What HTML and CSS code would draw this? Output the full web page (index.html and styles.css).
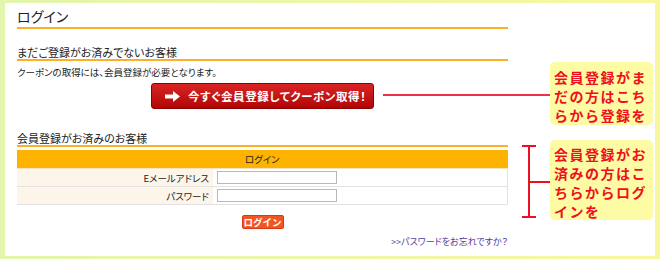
FILE: index.html
```html
<!DOCTYPE html>
<html lang="ja">
<head>
  <meta charset="UTF-8" />
  <title>ログイン</title>
  <link rel="stylesheet" href="styles.css">
</head>
<body>
  <div class="panel">
    <div class="content">
      <h1 class="title">ログイン</h1>

      <!-- 未登録 -->
      <h2 class="section">まだご登録がお済みでないお客様</h2>
      <p class="notice">クーポンの取得には、会員登録が必要となります。</p>
      <a class="btn-register" href="#">
        <svg width="15" height="11" viewBox="0 0 15 11"><path d="M0 3.5h8V0l7 5.5-7 5.5V7.5H0z" fill="#fff"/></svg>
        <span>今すぐ会員登録してクーポン取得！</span>
      </a>

      <!-- 登録済み -->
      <h2 class="section section-2">会員登録がお済みのお客様</h2>
      <table class="login-table">
        <tr><th colspan="2">ログイン</th></tr>
        <tr>
          <td class="label">Eメールアドレス</td>
          <td class="field"><input type="text" /></td>
        </tr>
        <tr>
          <td class="label">パスワード</td>
          <td class="field"><input type="password" /></td>
        </tr>
      </table>
      <div class="login-row"><button class="btn-login">ログイン</button></div>
      <div class="forgot"><a href="#">&gt;&gt;パスワードをお忘れですか？</a></div>
    </div>

    <!-- 注釈 -->
    <div class="note-line"></div>
    <div class="callout callout-1">会員登録がま<br>だの方はこち<br>らから登録を</div>

    <div class="bracket">
      <div class="bracket-cap top"></div>
      <div class="bracket-cap bottom"></div>
      <div class="bracket-arm"></div>
    </div>
    <div class="callout callout-2">会員登録がお<br>済みの方はこ<br>ちらからログ<br>インを</div>
  </div>
</body>
</html>
```

FILE: styles.css
```css
body {
  margin: 0;
  width: 660px;
  height: 259px;
  overflow: hidden;
  background: linear-gradient(to right, #e3f6ad, #f7f7a0);
  font-family: "Noto Sans CJK JP", "Noto Sans", sans-serif;
  color: #222;
}
.panel {
  position: relative;
  margin: 3px 5px 0;
  width: 650px;
  height: 253px;
  background: #fff;
}
.content {
  width: 491px;
  padding: 4px 0 0 12px;
  font-feature-settings: "palt";
}
.title {
  margin: 0;
  font-size: 14px;
  font-weight: normal;
  line-height: 18px;
  padding-bottom: 2px;
  border-bottom: 2px solid #fbb02a;
}
.section {
  margin: 16px 0 0;
  font-size: 11px;
  font-weight: normal;
  line-height: 14px;
  border-bottom: 2px solid #fbb02a;
}
.section-2 {
  margin-top: 22px;
}
.notice {
  margin: 4px 0 0;
  font-size: 9.5px;
  line-height: 14px;
}
.btn-register {
  display: flex;
  align-items: center;
  gap: 8px;
  box-sizing: border-box;
  width: 223px;
  height: 26px;
  margin: 4px auto 0;
  padding-left: 13px;
  border: 1px solid #8e0000;
  border-radius: 3px;
  background: linear-gradient(#d92424, #b10606);
  color: #fff;
  font-size: 11.5px;
  font-weight: bold;
  text-decoration: none;
  letter-spacing: 0.6px;
}
.login-table {
  width: 491px;
  margin-top: 3px;
  border-collapse: collapse;
  font-size: 9.5px;
}
.login-table th {
  height: 18px;
  padding: 0;
  background: #fdb300;
  font-weight: normal;
  border-bottom: 1px solid #f4e2c0;
}
.login-table td {
  height: 17px;
  padding: 0;
  border-bottom: 1px solid #e2e2e2;
}
.login-table .label {
  width: 192px;
  padding-right: 4px;
  text-align: right;
  background: #fdf5ea;
}
.login-table .field {
  padding-left: 4px;
  border-right: 1px solid #e2e2e2;
}
.field input {
  display: block;
  box-sizing: border-box;
  width: 120px;
  height: 13px;
  margin: 0;
  border: 1px solid #b8b8b8;
  padding: 0;
}
.login-row {
  display: flex;
  justify-content: center;
  margin-top: 10px;
}
.btn-login {
  width: 42px;
  height: 14px;
  padding: 0;
  border: 1px solid #d83a10;
  border-radius: 2px;
  background: #f25522;
  color: #fff;
  font-family: inherit;
  font-size: 9.5px;
  font-weight: bold;
  line-height: 12px;
}
.forgot {
  margin-top: 7px;
  text-align: right;
  font-size: 9px;
  line-height: 12px;
}
.forgot a {
  color: #553d9e;
  text-decoration: none;
}
.callout {
  position: absolute;
  left: 545px;
  width: 103px;
  box-sizing: border-box;
  padding: 6px 0 0 4px;
  border-radius: 5px;
  background: #fdfca4;
  color: #ee1020;
  font-size: 14px;
  font-weight: bold;
  line-height: 19px;
  letter-spacing: 1.5px;
}
.callout-1 {
  top: 59px;
  height: 63px;
}
.callout-2 {
  top: 137px;
  height: 80px;
  padding-top: 5px;
}
.note-line {
  position: absolute;
  left: 378px;
  top: 91px;
  width: 167px;
  height: 2px;
  background: #f0304a;
}
.bracket {
  position: absolute;
  left: 523px;
  top: 142px;
  width: 2px;
  height: 73px;
  background: #ee1020;
}
.bracket-cap {
  position: absolute;
  left: -6px;
  width: 14px;
  height: 2px;
  background: #ee1020;
}
.bracket-cap.top { top: 0; }
.bracket-cap.bottom { bottom: 0; }
.bracket-arm {
  position: absolute;
  left: 0;
  top: 36px;
  width: 22px;
  height: 2px;
  background: #ee1020;
}
```
